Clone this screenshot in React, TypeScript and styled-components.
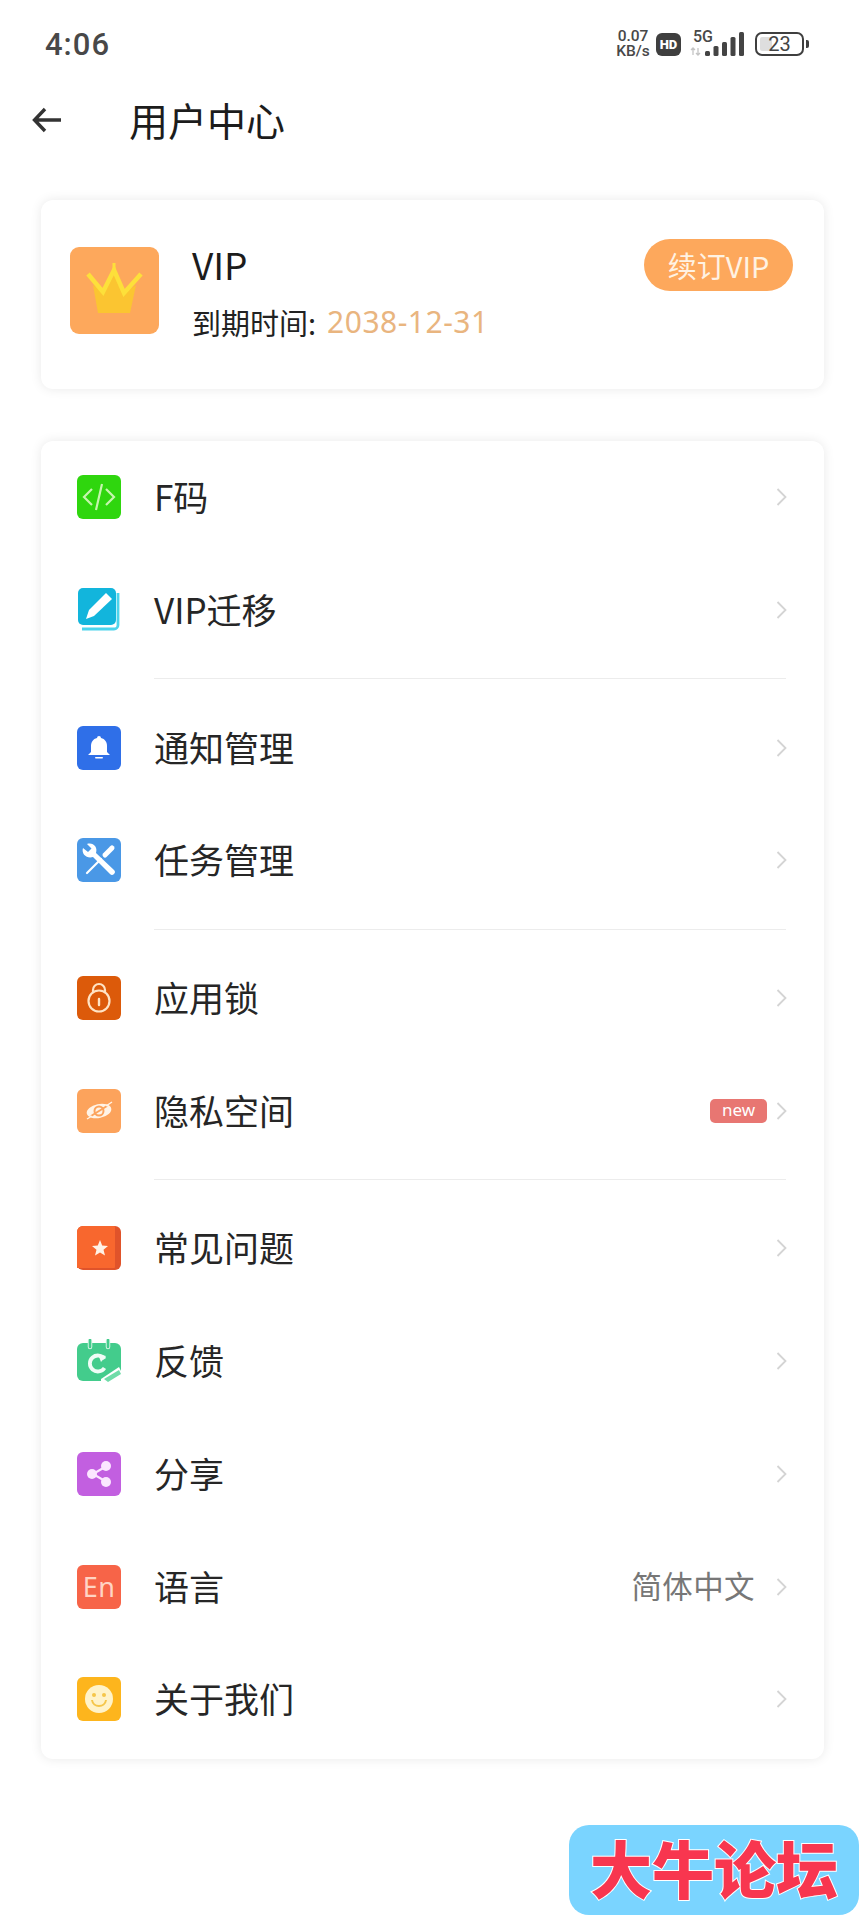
import React from 'react';
import styled, { createGlobalStyle } from 'styled-components';

const GlobalStyle = createGlobalStyle`
  html, body {
    margin: 0;
    padding: 0;
    background: #fff;
  }
  * {
    box-sizing: border-box;
  }
`;

const Screen = styled.div`
  position: relative;
  width: 864px;
  height: 1920px;
  overflow: hidden;
  background: #fff;
  color: #222;
  font-family: "Noto Sans CJK SC", "Noto Sans", sans-serif;
`;

const StatusBar = styled.div`
  height: 88px;
  padding: 0 60px 0 45px;
  display: flex;
  align-items: center;
  justify-content: space-between;
`;

const Clock = styled.div`
  font-family: Roboto, sans-serif;
  font-size: 31px;
  font-weight: 500;
  letter-spacing: 1px;
  color: #484848;
`;

const StatusIcons = styled.div`
  display: flex;
  align-items: center;
`;

const Speed = styled.div`
  width: 36px;
  font-family: Roboto, sans-serif;
  font-size: 15.5px;
  font-weight: 500;
  line-height: 15px;
  color: #484848;
  text-align: center;
`;

const HdBadge = styled.div`
  width: 25px;
  height: 23px;
  margin-left: 5px;
  border-radius: 6px;
  background: #3f3f3f;
  color: #fff;
  font-family: Roboto, sans-serif;
  font-size: 13px;
  font-weight: 900;
  display: flex;
  align-items: center;
  justify-content: center;
`;

const Network = styled.div`
  position: relative;
  width: 54px;
  height: 26px;
  margin-left: 9px;
`;

const NetworkLabel = styled.span`
  position: absolute;
  left: 3px;
  top: -4px;
  font-family: Roboto, sans-serif;
  font-size: 16px;
  font-weight: 500;
  color: #484848;
`;

const Battery = styled.div`
  position: relative;
  width: 49px;
  height: 24px;
  margin-left: 11px;
  border: 2px solid #3f3f3f;
  border-radius: 7px;
  font-family: Roboto, sans-serif;
  font-size: 20px;
  color: #444;
  display: flex;
  align-items: center;
  justify-content: center;

  &::before {
    content: '';
    position: absolute;
    left: 3px;
    top: 3px;
    bottom: 3px;
    width: 12px;
    border-radius: 2px;
    background: #dedede;
  }

  &::after {
    content: '';
    position: absolute;
    right: -7px;
    top: 6px;
    width: 3px;
    height: 8px;
    border-radius: 0 2px 2px 0;
    background: #3f3f3f;
  }
`;

const BatteryLevel = styled.span`
  position: relative;
  line-height: 1;
`;

const Header = styled.div`
  height: 64px;
  padding-left: 32px;
  display: flex;
  align-items: center;
`;

const BackButton = styled.div`
  width: 97px;
  display: flex;
  align-items: center;
`;

const Title = styled.div`
  padding-bottom: 3px;
  font-size: 39px;
  color: #1c1c1c;
`;

const Card = styled.div`
  margin: 0 40px 0 41px;
  background: #fff;
  border-radius: 12px;
  box-shadow: 0 0 12px rgba(0, 0, 0, 0.09);
`;

const VipCard = styled(Card)`
  height: 189px;
  margin-top: 48px;
  padding: 39px 31px 0 29px;
  display: flex;
  align-items: flex-start;
`;

const Crown = styled.div`
  width: 89px;
  height: 87px;
  margin-top: 8px;
  border-radius: 9px;
  background: #fda85c;
`;

const VipInfo = styled.div`
  flex: 1;
  margin-left: 33px;
`;

const VipName = styled.div`
  font-size: 37px;
  line-height: 50px;
  color: #1c1c1c;
`;

const Expiry = styled.div`
  margin-top: 12px;
  font-size: 29px;
  line-height: 42px;
  color: #222;
  display: flex;
  align-items: center;
`;

const ExpiryDate = styled.span`
  margin-left: 11px;
  font-family: "Noto Sans", sans-serif;
  font-size: 30px;
  letter-spacing: 0.5px;
  color: #e9b57f;
`;

const RenewButton = styled.div`
  width: 149px;
  height: 52px;
  border-radius: 26px;
  background: #fda85c;
  color: #fff2e2;
  font-size: 29px;
  display: flex;
  align-items: center;
  justify-content: center;
`;

const MenuCard = styled(Card)`
  height: 1318px;
  margin-top: 52px;
`;

const Row = styled.div`
  height: 112.7px;
  padding: 0 37px 0 36px;
  display: flex;
  align-items: center;
`;

const IconTile = styled.div<{ $bg: string }>`
  width: 44px;
  height: 44px;
  flex: none;
  border-radius: 6px;
  background: ${(p) => p.$bg};
  display: flex;
  align-items: center;
  justify-content: center;
`;

const PlainIcon = styled.div`
  width: 44px;
  height: 44px;
  flex: none;
`;

const EnLabel = styled.span`
  font-family: "Noto Sans", sans-serif;
  font-size: 27px;
  line-height: 1;
  letter-spacing: 0.5px;
  color: #ffd4c4;
`;

const Label = styled.div`
  flex: 1;
  margin-left: 33px;
  padding-bottom: 3px;
  font-size: 35px;
  color: #262626;
`;

const Value = styled.div`
  margin-right: 21px;
  padding-bottom: 3px;
  font-size: 30.5px;
  letter-spacing: 0.4px;
  color: #777;
`;

const NewBadge = styled.div`
  width: 57px;
  height: 24px;
  margin-right: 9px;
  border-radius: 5px;
  background: #e87672;
  color: #fff;
  font-family: "Noto Sans", sans-serif;
  font-size: 17px;
  line-height: 22px;
  text-align: center;
`;

const Divider = styled.div`
  height: 1px;
  margin: 12px 38px 12px 113px;
  background: #ececec;
`;

const Watermark = styled.div`
  position: absolute;
  left: 569px;
  top: 1825px;
  width: 290px;
  height: 90px;
  border-radius: 20px;
  background: #7ad4ff;
  color: #f8364f;
  font-size: 62px;
  font-weight: 900;
  line-height: 84px;
  text-align: center;
  -webkit-text-stroke: 2px #fff;
  paint-order: stroke fill;
`;

const Chevron = () => (
  <svg width="11" height="18" viewBox="0 0 11 18" fill="none">
    <path d="M1.5 1L9.5 9L1.5 17" stroke="#d4d4d4" strokeWidth="1.8" />
  </svg>
);

const CrownIcon = () => (
  <svg width="89" height="87" viewBox="0 0 89 87" fill="none">
    <path d="M23 38L28 66H60L66 38L54 46L44 28L34 46Z" fill="#fbc531" />
    <path d="M18 27L33 45L44 23L54 46L71 27" stroke="#fde03a" strokeWidth="4.5" />
    <path d="M44 25V16" stroke="#fde03a" strokeWidth="3" />
  </svg>
);

const BackArrow = () => (
  <svg width="30" height="26" viewBox="0 0 30 26" fill="none">
    <path d="M29 13H3M13 2L2.500 13L13 24" stroke="#333" strokeWidth="3.4" />
  </svg>
);

const Bars = () => (
  <svg width="54" height="26" viewBox="0 0 54 26">
    <path d="M3 17V24M1 19l2-2 2 2M8 24V17M6 22l2 2 2-2" stroke="#c4c4c4" strokeWidth="1.3" fill="none" />
    <rect x="15" y="20" width="5" height="5" rx="1.5" fill="#444" />
    <rect x="23.5" y="15" width="5" height="10" rx="1.5" fill="#444" />
    <rect x="32" y="11" width="5" height="14" rx="1.5" fill="#444" />
    <rect x="40.5" y="6" width="5" height="19" rx="1.5" fill="#444" />
    <rect x="49" y="1" width="5" height="24" rx="1.5" fill="#444" />
  </svg>
);

const CodeGlyph = () => (
  <svg width="44" height="44" viewBox="0 0 44 44" fill="none">
    <path d="M15 14L7 22L15 30M29 14L37 22L29 30M25 9L19 35" stroke="#c6f5ae" strokeWidth="2.2" />
  </svg>
);

const BookIcon = () => (
  <svg width="44" height="44" viewBox="0 0 44 44">
    <path d="M5 41H37a4 4 0 0 0 4-4V5" fill="none" stroke="#4cd4ec" strokeWidth="2.800" />
    <rect x="1" y="0" width="38" height="37" rx="5" fill="#12b5dc" />
    <path d="M29 5L35 11L17 28L9 31L12 22Z" fill="#fff" />
  </svg>
);

const BellGlyph = () => (
  <svg width="44" height="44" viewBox="0 0 44 44">
    <path d="M22 10a2 2 0 0 1 2 2c4 1 6 4 6 8v6l3 3H11l3-3v-6c0-4 2-7 6-8a2 2 0 0 1 2-2Z" fill="#fff" />
    <rect x="18" y="31" width="8" height="1.6" rx="0.8" fill="#fff" />
  </svg>
);

const ToolsGlyph = () => (
  <svg width="44" height="44" viewBox="0 0 44 44" fill="#fff">
    <path d="M10 6L14.500 10.500L11 14L6 10C4 16 10 21 16 19L33 36a2.500 2.500 0 0 0 4-4L19 15C21 9 16 4 10 6Z" />
    <path d="M35 10L28 17" stroke="#fff" strokeWidth="5" strokeLinecap="round" />
    <path d="M24 21L10 35" stroke="#fff" strokeWidth="2.200" strokeLinecap="round" />
  </svg>
);

const LockGlyph = () => (
  <svg width="44" height="44" viewBox="0 0 44 44" fill="none">
    <circle cx="22" cy="25" r="10.5" stroke="#ffe3c4" strokeWidth="2.2" />
    <path d="M16 16.500V14a6 6 0 0 1 12 0V16.500" stroke="#ffe3c4" strokeWidth="2.2" />
    <path d="M22 23V29" stroke="#ffe3c4" strokeWidth="2.4" strokeLinecap="round" />
  </svg>
);

const EyeGlyph = () => (
  <svg width="44" height="44" viewBox="0 0 44 44" fill="none">
    <ellipse cx="22" cy="22" rx="12.500" ry="7" transform="rotate(-12 22 22)" fill="#fff3e6" />
    <circle cx="22" cy="22" r="4.500" stroke="#fca35c" strokeWidth="2" />
    <path d="M14 27L30 17" stroke="#fca35c" strokeWidth="2" />
    <path d="M10 30L15 27M29 17L35 13" stroke="#fff3e6" strokeWidth="1.400" />
  </svg>
);

const StarIcon = () => (
  <svg width="44" height="44" viewBox="0 0 44 44">
    <rect width="44" height="44" rx="6" fill="#e0532a" />
    <path d="M6 0H37a1 1 0 0 1 1 1V41a1 1 0 0 1-1 1H0V6a6 6 0 0 1 6-6Z" fill="#f8672e" />
    <path d="M23 14L25.200 19.500L31 20L26.500 23.700L28 29.500L23 26.500L18 29.500L19.500 23.700L15 20L20.800 19.500Z" fill="#fff2e6" />
  </svg>
);

const CalendarIcon = () => (
  <svg width="44" height="44" viewBox="0 0 44 44" fill="none">
    <rect y="4" width="44" height="38" rx="6" fill="#43cc8c" />
    <path d="M13 2V8M31 2V8" stroke="#d8f5e6" strokeWidth="4.500" strokeLinecap="round" />
    <path d="M13 1V8M31 1V8" stroke="#43cc8c" strokeWidth="2.600" strokeLinecap="round" />
    <path d="M27.500 20a8 8 0 1 0 0 9" stroke="#f0fcf6" strokeWidth="3.800" />
    <path d="M21 15L29 17L24 23Z" fill="#f0fcf6" />
    <path d="M24 40L42 28L50 44H24Z" fill="#fff" />
    <path d="M27 40L42 31L44 35L31 43Z" fill="#6fdca8" />
  </svg>
);

const ShareGlyph = () => (
  <svg width="44" height="44" viewBox="0 0 44 44" fill="#fbe6ff">
    <path d="M28 15L16 22L28 29" stroke="#fbe6ff" strokeWidth="2.2" fill="none" />
    <circle cx="29" cy="14" r="5" />
    <circle cx="15" cy="22" r="5" />
    <circle cx="29" cy="30" r="5" />
  </svg>
);

const SmileGlyph = () => (
  <svg width="44" height="44" viewBox="0 0 44 44" fill="none">
    <circle cx="22" cy="22" r="14" fill="#fff3c9" />
    <circle cx="17" cy="18" r="2" fill="#f5c64a" />
    <circle cx="27" cy="18" r="2" fill="#f5c64a" />
    <path d="M15 23C16 31 28 31 29 23" stroke="#f5c64a" strokeWidth="2" />
  </svg>
);

type Item = {
  label: string;
  icon: React.ReactNode;
  value?: string;
  isNew?: boolean;
};

const groups: Item[][] = [
  [
    { label: 'F码', icon: <IconTile $bg="#2fd60e"><CodeGlyph /></IconTile> },
    { label: 'VIP迁移', icon: <PlainIcon><BookIcon /></PlainIcon> },
  ],
  [
    { label: '通知管理', icon: <IconTile $bg="#2f6fe8"><BellGlyph /></IconTile> },
    { label: '任务管理', icon: <IconTile $bg="#4a98e6"><ToolsGlyph /></IconTile> },
  ],
  [
    { label: '应用锁', icon: <IconTile $bg="#dc5a0a"><LockGlyph /></IconTile> },
    { label: '隐私空间', icon: <IconTile $bg="#fca35c"><EyeGlyph /></IconTile>, isNew: true },
  ],
  [
    { label: '常见问题', icon: <PlainIcon><StarIcon /></PlainIcon> },
    { label: '反馈', icon: <PlainIcon><CalendarIcon /></PlainIcon> },
    { label: '分享', icon: <IconTile $bg="#c25fe0"><ShareGlyph /></IconTile> },
    { label: '语言', icon: <IconTile $bg="#f76448"><EnLabel>En</EnLabel></IconTile>, value: '简体中文' },
    { label: '关于我们', icon: <IconTile $bg="#fdb51d"><SmileGlyph /></IconTile> },
  ],
];

const App = () => (
  <Screen>
    <GlobalStyle />
    <StatusBar>
      <Clock>4:06</Clock>
      <StatusIcons>
        <Speed>0.07<br />KB/s</Speed>
        <HdBadge>HD</HdBadge>
        <Network>
          <NetworkLabel>5G</NetworkLabel>
          <Bars />
        </Network>
        <Battery><BatteryLevel>23</BatteryLevel></Battery>
      </StatusIcons>
    </StatusBar>
    <Header>
      <BackButton><BackArrow /></BackButton>
      <Title>用户中心</Title>
    </Header>
    <VipCard>
      <Crown><CrownIcon /></Crown>
      <VipInfo>
        <VipName>VIP</VipName>
        <Expiry>
          到期时间:
          <ExpiryDate>2038-12-31</ExpiryDate>
        </Expiry>
      </VipInfo>
      <RenewButton>续订VIP</RenewButton>
    </VipCard>
    <MenuCard>
      {groups.map((group, i) => (
        <React.Fragment key={i}>
          {i > 0 && <Divider />}
          {group.map((item) => (
            <Row key={item.label}>
              {item.icon}
              <Label>{item.label}</Label>
              {item.isNew && <NewBadge>new</NewBadge>}
              {item.value && <Value>{item.value}</Value>}
              <Chevron />
            </Row>
          ))}
        </React.Fragment>
      ))}
    </MenuCard>
    <Watermark>大牛论坛</Watermark>
  </Screen>
);

export default App;
